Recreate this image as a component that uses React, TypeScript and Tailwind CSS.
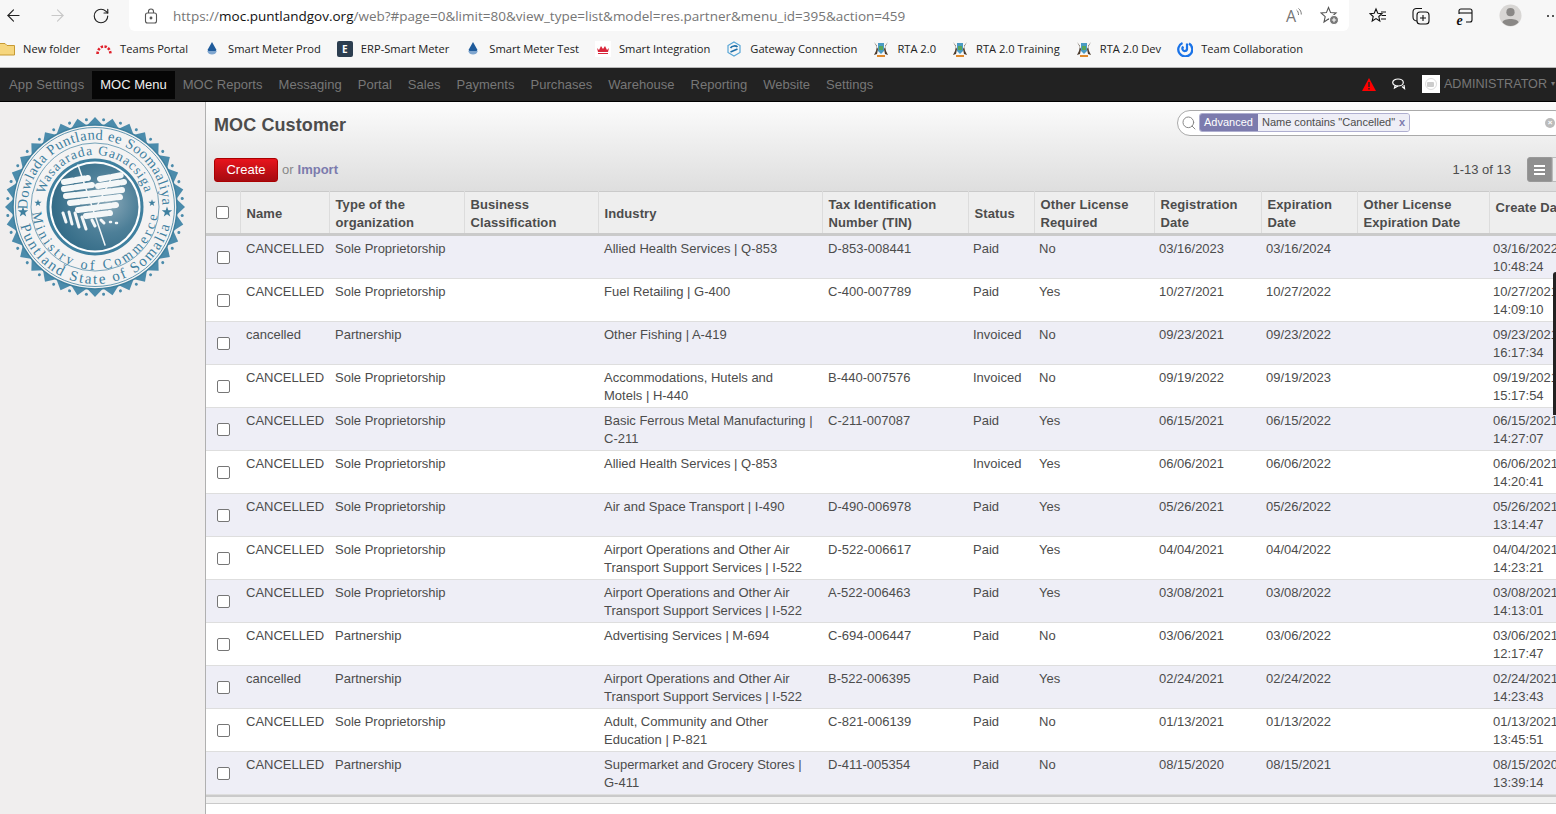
import { ReactNode } from "react";
import { ArrowLeft, ArrowRight, RotateCw, Search } from "lucide-react";

const columns = [34, 89, 135, 134, 224, 146, 66, 120, 107, 96, 132, 120];

const rows = [
  ["CANCELLED", "Sole Proprietorship", "Allied Health Services | Q-853", "D-853-008441", "Paid", "No", "03/16/2023", "03/16/2024", "03/16/2022", "10:48:24"],
  ["CANCELLED", "Sole Proprietorship", "Fuel Retailing | G-400", "C-400-007789", "Paid", "Yes", "10/27/2021", "10/27/2022", "10/27/2021", "14:09:10"],
  ["cancelled", "Partnership", "Other Fishing | A-419", "", "Invoiced", "No", "09/23/2021", "09/23/2022", "09/23/2021", "16:17:34"],
  ["CANCELLED", "Sole Proprietorship", "Accommodations, Hutels and\nMotels | H-440", "B-440-007576", "Invoiced", "No", "09/19/2022", "09/19/2023", "09/19/2021", "15:17:54"],
  ["CANCELLED", "Sole Proprietorship", "Basic Ferrous Metal Manufacturing |\nC-211", "C-211-007087", "Paid", "Yes", "06/15/2021", "06/15/2022", "06/15/2021", "14:27:07"],
  ["CANCELLED", "Sole Proprietorship", "Allied Health Services | Q-853", "", "Invoiced", "Yes", "06/06/2021", "06/06/2022", "06/06/2021", "14:20:41"],
  ["CANCELLED", "Sole Proprietorship", "Air and Space Transport | I-490", "D-490-006978", "Paid", "Yes", "05/26/2021", "05/26/2022", "05/26/2021", "13:14:47"],
  ["CANCELLED", "Sole Proprietorship", "Airport Operations and Other Air\nTransport Support Services | I-522", "D-522-006617", "Paid", "Yes", "04/04/2021", "04/04/2022", "04/04/2021", "14:23:21"],
  ["CANCELLED", "Sole Proprietorship", "Airport Operations and Other Air\nTransport Support Services | I-522", "A-522-006463", "Paid", "Yes", "03/08/2021", "03/08/2022", "03/08/2021", "14:13:01"],
  ["CANCELLED", "Partnership", "Advertising Services | M-694", "C-694-006447", "Paid", "No", "03/06/2021", "03/06/2022", "03/06/2021", "12:17:47"],
  ["cancelled", "Partnership", "Airport Operations and Other Air\nTransport Support Services | I-522", "B-522-006395", "Paid", "Yes", "02/24/2021", "02/24/2022", "02/24/2021", "14:23:43"],
  ["CANCELLED", "Sole Proprietorship", "Adult, Community and Other\nEducation | P-821", "C-821-006139", "Paid", "No", "01/13/2021", "01/13/2022", "01/13/2021", "13:45:51"],
  ["CANCELLED", "Partnership", "Supermarket and Grocery Stores |\nG-411", "D-411-005354", "Paid", "No", "08/15/2020", "08/15/2021", "08/15/2020", "13:39:14"],
];

const headers = ["Name", "Type of the organization", "Business Classification", "Industry", "Tax Identification Number (TIN)", "Status", "Other License Required", "Registration Date", "Expiration Date", "Other License Expiration Date"];

const menus = ["Messaging", "Portal", "Sales", "Payments", "Purchases", "Warehouse", "Reporting", "Website", "Settings"];

function Drop({ color }: { color: string }): ReactNode {
  return (
    <svg width="16" height="16" viewBox="0 0 16 16">
      <path d="M8 1 L12.5 9 A5.2 5.2 0 0 1 3.5 9 Z" fill={color} />
      <path d="M3.2 10 H12.8 A5 5 0 0 1 3.2 10 Z" fill="#7fa6cf" />
    </svg>
  );
}

function Crest(): ReactNode {
  return (
    <svg width="16" height="18" viewBox="0 0 16 18">
      <path d="M1 2 L4 6 L3 11 L1 15 L4 14 L5 9 Z M15 2 L12 6 L13 11 L15 15 L12 14 L11 9 Z" fill="#4a3a2c" />
      <path d="M5 3 H11 V11 L8 14 L5 11 Z" fill="#4a9bc4" />
      <path d="M6 6 H10 V10 H6 Z" fill="#58a55c" />
      <path d="M4 15 H12 V17 H4 Z" fill="#e08a2c" />
    </svg>
  );
}

function Bookmark({ icon, label }: { icon: ReactNode; label: string }): ReactNode {
  return (
    <div className="flex shrink-0 items-center gap-2">
      <div className="flex h-4 w-4 items-center justify-center">{icon}</div>
      <span className="text-[11.15px] text-[#222]">{label}</span>
    </div>
  );
}

function BrowserBar(): ReactNode {
  return (
    <div className="bg-[#f7f7f7] font-['Open_Sans',sans-serif]">
      <div className="flex h-[34px] items-start">
        <div className="flex h-[31px] w-[129px] shrink-0 items-center pl-[4px] text-[#222]">
          <ArrowLeft size={19} strokeWidth={1.4} />
          <ArrowRight size={19} strokeWidth={1.4} className="ml-[25px] text-[#c8c8c8]" />
          <RotateCw size={18} strokeWidth={1.5} className="ml-[25px]" />
        </div>
        <div className="flex h-[31px] w-[1220px] shrink-0 items-center rounded-b-md bg-white">
          <svg width="14" height="16" viewBox="0 0 14 16" fill="none" stroke="#555" strokeWidth="1.1" className="ml-[15px]">
            <rect x="1.5" y="5" width="11" height="10" rx="2" />
            <path d="M4.5 5 V3.5 A2.5 2.5 0 0 1 9.5 3.5 V5" />
            <circle cx="7" cy="10" r="0.9" fill="#555" />
          </svg>
          <span className="ml-[15px] pt-px text-[13.5px] text-[#767676]">
            https://<span className="text-[#111]">moc.puntlandgov.org</span>/web?#page=0&limit=80&view_type=list&model=res.partner&menu_id=395&action=459
          </span>
          <div className="ml-auto mr-[18px] flex items-start text-[#777]">
            <span className="text-[16px] leading-none">A</span>
            <svg width="6" height="10" viewBox="0 0 6 10" fill="none" stroke="#777" strokeWidth="1">
              <path d="M0.500 2 C2 3 2.500 5 2.500 7 M2.500 0.500 C4.500 2 5.300 4 5.300 6.500" />
            </svg>
          </div>
          <svg width="19" height="19" viewBox="0 0 19 19" fill="none" stroke="#555" strokeWidth="1.1" className="mr-[10px]">
            <path d="M8.500 1.500 L10.600 6.600 L16 7 L11.800 10.600 L13 16 L8.500 13 L4 16 L5.200 10.600 L1 7 L6.400 6.600 Z" />
            <circle cx="14" cy="14" r="4.500" fill="#777" stroke="#fff" />
            <path d="M11.800 14 H16.200 M14 11.800 V16.200" stroke="#fff" />
          </svg>
        </div>
        <div className="flex h-[31px] items-center">
          <svg width="18" height="18" viewBox="0 0 18 18" fill="none" stroke="#111" strokeWidth="1.1" className="ml-[20px]">
            <path d="M7 2 L8.800 6.200 L13 6.600 L9.800 9.500 L10.800 14 L7 11.600 L3.200 14 L4.200 9.500 L1 6.600 L5.200 6.200 Z" />
            <path d="M12 5 H17 M12.500 8.500 H17 M12 12 H17" />
          </svg>
          <svg width="20" height="20" viewBox="0 0 20 20" fill="none" stroke="#111" strokeWidth="1.1" className="ml-[24px]">
            <path d="M6 15 C3 15 2 13 2 11 V6 C2 4 3.500 2.500 5.500 2.500 H11" />
            <rect x="6" y="6" width="12" height="12" rx="3" />
            <path d="M12 9 V15 M9 12 H15" />
          </svg>
          <svg width="20" height="20" viewBox="0 0 20 20" fill="none" stroke="#111" strokeWidth="1.1" className="ml-[24px]">
            <path d="M4 8 V5 A2 2 0 0 1 6 3 H15 A2 2 0 0 1 17 5 V14 A2 2 0 0 1 15 16 H11" />
            <path d="M4 7 H17" />
            <text x="1.500" y="19" fontSize="14" fontWeight="700" fontStyle="italic" fill="#111" stroke="none" fontFamily="'Liberation Serif',serif">e</text>
          </svg>
          <svg width="23" height="23" viewBox="0 0 24 24" className="ml-[24px]">
            <circle cx="12" cy="12" r="11.500" fill="#d8d6d4" />
            <circle cx="12" cy="8.500" r="4.300" fill="#8a8886" />
            <path d="M3.500 19 C5 14.500 19 14.500 20.500 19 A11 11 0 0 1 3.500 19 Z" fill="#8a8886" />
          </svg>
          <span className="ml-[25px] flex gap-[3px]">
            <span className="h-[2px] w-[2px] rounded-full bg-[#222]" />
            <span className="h-[2px] w-[2px] rounded-full bg-[#222]" />
          </span>
        </div>
      </div>
      <div className="-ml-[1px] flex h-[34px] items-center gap-4 border-b border-[#b8b8b8] pb-[2px]">
        <Bookmark label="New folder" icon={
          <svg width="16" height="14" viewBox="0 0 16 14"><path d="M0.500 1.500 H6 L8 3.500 H15.500 V13 H0.500 Z" fill="#f6d67e" stroke="#c79a33" /></svg>
        } />
        <Bookmark label="Teams Portal" icon={
          <svg width="16" height="12" viewBox="0 0 16 12" fill="none" stroke="#e0202a" strokeWidth="2.600" strokeDasharray="2.400 1.400"><path d="M1.500 11 C2 1 14 1 14.500 11" /></svg>
        } />
        <Bookmark label="Smart Meter Prod" icon={<Drop color="#1f5b9b" />} />
        <Bookmark label="ERP-Smart Meter" icon={
          <div className="flex h-4 w-4 items-center justify-center rounded-[2px] bg-[#2c3e50] text-[10px] font-bold text-white">E</div>
        } />
        <Bookmark label="Smart Meter Test" icon={<Drop color="#1f5b9b" />} />
        <Bookmark label="Smart Integration" icon={
          <svg width="16" height="16" viewBox="0 0 16 16"><rect width="16" height="16" fill="#fff" /><path d="M2 7 L4 9 L6 5 L8 8 L10 5 L12 9 L14 7 L13 11 H3 Z" fill="#d9263a" /><path d="M3 12 H13 V13 H3 Z" fill="#d9263a" /></svg>
        } />
        <Bookmark label="Gateway Connection" icon={
          <svg width="16" height="16" viewBox="0 0 16 16" fill="none"><path d="M8 1 L14 4.500 V11.500 L8 15 L2 11.500 V4.500 Z" stroke="#58a6d6" strokeWidth="1.200" /><path d="M4.500 7 C6 4.500 10 4.500 11.500 6 M4.500 11 L11.500 8" stroke="#1f6fa8" strokeWidth="1.700" /></svg>
        } />
        <Bookmark label="RTA 2.0" icon={<Crest />} />
        <Bookmark label="RTA 2.0 Training" icon={<Crest />} />
        <Bookmark label="RTA 2.0 Dev" icon={<Crest />} />
        <Bookmark label="Team Collaboration" icon={
          <svg width="16" height="16" viewBox="0 0 16 16" fill="none"><path d="M5.500 2 A7 7 0 1 0 12 2.500" stroke="#1a73e8" strokeWidth="2.300" /><path d="M10 2.500 V7.500 A2.300 2.300 0 1 1 6.500 5.800" stroke="#1a73e8" strokeWidth="2.200" /></svg>
        } />
      </div>
    </div>
  );
}

function NavBar(): ReactNode {
  return (
    <div className="flex h-[34px] items-center justify-between border-b border-black bg-[#222] pl-px font-['Liberation_Sans',sans-serif] text-[13px] tracking-[0.03px] text-[#777]">
      <div className="flex items-center">
        <span className="px-2 tracking-[0.13px]">App Settings</span>
        <span className="flex h-[28px] items-center bg-[#060606] px-2 tracking-normal text-[#eee]">MOC Menu</span>
        <span className="px-2">MOC Reports</span>
        {menus.map((m) => (
          <span key={m} className="px-2">{m}</span>
        ))}
      </div>
      <div className="flex items-center">
        <svg width="14" height="13" viewBox="0 0 14 13">
          <path d="M7 0 L14 13 H0 Z" fill="#f00" />
          <path d="M6.300 4 H7.700 V9 H6.300 Z M6.300 10 H7.700 V11.500 H6.300 Z" fill="#222" />
        </svg>
        <svg width="14" height="12" viewBox="0 0 14 12" fill="none" stroke="#fff" strokeWidth="1.200" className="ml-[16px]">
          <ellipse cx="6" cy="4.500" rx="5.300" ry="3.500" />
          <path d="M3 8 L2.500 10 L6 8 M10 8.500 L12.500 10.500 L12 7" />
        </svg>
        <div className="ml-[16px] flex h-[18px] w-[18px] items-center justify-center bg-white">
          <div className="flex h-[12px] w-[12px] items-center justify-center rounded-full border border-[#ddd]">
            <div className="h-[5px] w-[7px] rounded-[1px] bg-[#ccc]" />
          </div>
        </div>
        <span className="ml-[4px] whitespace-nowrap text-[12.6px] tracking-normal">ADMINISTRATOR</span>
        <span className="ml-[4px] w-[5px] overflow-hidden text-[8px]">▾</span>
      </div>
    </div>
  );
}

// arc on the seal, angles in degrees clockwise from 12 o'clock
function arc(r: number, from: number, to: number): string {
  const pt = (a: number) => {
    const rad = (a * Math.PI) / 180;
    return `${(91 + r * Math.sin(rad)).toFixed(2)} ${(91 - r * Math.cos(rad)).toFixed(2)}`;
  };
  const sweep = to > from ? 1 : 0;
  const large = Math.abs(to - from) > 180 ? 1 : 0;
  return `M ${pt(from)} A ${r} ${r} 0 ${large} ${sweep} ${pt(to)}`;
}

function Star({ x, y, r }: { x: number; y: number; r: number }): ReactNode {
  const pts = Array.from({ length: 10 }, (_, i) => {
    const a = (i * Math.PI) / 5 - Math.PI / 2;
    const d = i % 2 === 0 ? r : r * 0.4;
    return `${(x + d * Math.cos(a)).toFixed(2)},${(y + d * Math.sin(a)).toFixed(2)}`;
  });
  return <polygon points={pts.join(" ")} />;
}

function Emblem(): ReactNode {
  const teeth = Array.from({ length: 32 }, (_, i) => (i * 360) / 32);
  const teal = "#3f809f";
  return (
    <svg width="182" height="182" viewBox="0 0 182 182" className="ml-[4px] mt-[14px]">
      <defs>
        <radialGradient id="seal" cx="0.65" cy="0.45" r="0.7">
          <stop offset="0" stopColor="#8aa9b9" />
          <stop offset="0.5" stopColor="#4d7f98" />
          <stop offset="1" stopColor="#2f6884" />
        </radialGradient>
        <filter id="soft"><feGaussianBlur stdDeviation="0.6" /></filter>
        <path id="topOuter" d={arc(67.5, -92, 92)} />
        <path id="bottomOuter" d={arc(77, -104, -256)} />
        <path id="topInner" d={arc(52, -76, 76)} />
        <path id="bottomInner" d={arc(63, -95, -265)} />
      </defs>
      {teeth.map((a) => (
        <g key={a} transform={`rotate(${a} 91 91)`}>
          <path d="M82.500 10 L91 1 L99.500 10 Z" fill="#4b8bab" />
          <circle cx="99.600" cy="3.800" r="1.500" fill="#4b8bab" />
        </g>
      ))}
      <circle cx="91" cy="91" r="82" fill="#f4f3f3" stroke={teal} strokeWidth="1.500" />
      <circle cx="91" cy="91" r="79.500" fill="none" stroke={teal} strokeWidth="0.800" />
      <circle cx="91" cy="91" r="64" fill="none" stroke={teal} strokeWidth="0.700" />
      <g fill={teal} fontFamily="'Liberation Serif',serif">
        <text fontSize="14.500">
          <textPath href="#topOuter" textLength="212">Dowlada Puntland ee Soomaaliya</textPath>
        </text>
        <text fontSize="15">
          <textPath href="#bottomOuter" textLength="204">Puntland State of Somalia</textPath>
        </text>
        <text fontSize="13.500">
          <textPath href="#topInner" textLength="136">Wasaarada Ganacsiga</textPath>
        </text>
        <text fontSize="14">
          <textPath href="#bottomInner" textLength="184">Ministry of  Commerce</textPath>
        </text>
        <Star x={19} y={96} r={5.500} />
        <Star x={163} y={96} r={5.500} />
        <Star x={34} y={87} r={3.800} />
        <Star x={148} y={87} r={3.800} />
      </g>
      <circle cx="91" cy="91" r="48.500" fill={teal} />
      <circle cx="91" cy="91" r="45.500" fill="#fff" />
      <circle cx="91" cy="91" r="43.500" fill="url(#seal)" />
      <g fill="none" stroke="#f4f7f8" strokeLinecap="round" filter="url(#soft)">
        <path d="M74 49 L101 129" strokeWidth="1.500" />
        <path d="M109 59 L91 94" strokeWidth="1.500" />
        <g strokeWidth="6" strokeDasharray="9 3">
          <path d="M60 66 L84 62" /><path d="M96 63 L118 59" />
          <path d="M60 73 L88 69" /><path d="M94 70 L120 66" />
          <path d="M62 80 L118 74" />
          <path d="M66 87 L116 81" />
          <path d="M74 94 L112 89" />
          <path d="M82 100 L106 97" />
        </g>
        <g strokeWidth="3">
          <path d="M59 97 L62 106" /><path d="M65 96 L68 108" /><path d="M71 97 L75 111" /><path d="M78 101 L82 113" /><path d="M88 104 L91 110" /><path d="M97 104 L100 107" />
        </g>
        <path d="M106 106 L107 106 M112 107 L113 107" strokeWidth="2.500" />
      </g>
    </svg>
  );
}

function Checkbox(): ReactNode {
  return <div className="mx-auto h-[13px] w-[13px] rounded-[2px] border border-[#767676] bg-white" />;
}

function ListTable(): ReactNode {
  return (
    <table className="w-[1403px] table-fixed border-collapse text-[13px] leading-[18px] text-[#4c4c4c]">
      <colgroup>
        {columns.map((w, i) => (
          <col key={i} width={w} />
        ))}
      </colgroup>
      <thead>
        <tr className="h-[43px] border-t border-b-[3px] border-t-[#cacaca] border-b-[#cacaca] bg-[#eee]">
          <th className="border-r border-[#dcdcdc] p-0"><Checkbox /></th>
          {headers.map((h) => (
            <th key={h} className="border-r border-[#dcdcdc] px-[6px] pb-0 pt-[2px] text-left align-middle font-bold tracking-[0.1px]">{h}</th>
          ))}
          <th className="whitespace-nowrap px-[6px] pb-[10px] pt-0 text-left align-middle font-bold tracking-[0.1px]">Create Date</th>
        </tr>
      </thead>
      <tbody>
        {rows.map((r, i) => (
          <tr key={i} className={`h-[43px] border-b border-[#dedede] ${i % 2 === 0 ? "bg-[#eeeef6]" : "bg-white"}`}>
            <td className="p-0"><Checkbox /></td>
            <td className="px-[6px] pb-[2px] pt-[4px] align-top">{r[0]}</td>
            <td className="px-[6px] pb-[2px] pt-[4px] align-top">{r[1]}</td>
            <td className="px-[6px] pb-[2px] pt-[4px] align-top" />
            <td className="whitespace-pre-line px-[6px] pb-[2px] pt-[4px] align-top">{r[2]}</td>
            <td className="px-[6px] pb-[2px] pt-[4px] align-top">{r[3]}</td>
            <td className="px-[5px] pb-[2px] pt-[4px] align-top">{r[4]}</td>
            <td className="px-[5px] pb-[2px] pt-[4px] align-top">{r[5]}</td>
            <td className="px-[5px] pb-[2px] pt-[4px] align-top">{r[6]}</td>
            <td className="px-[5px] pb-[2px] pt-[4px] align-top">{r[7]}</td>
            <td className="px-[5px] pb-[2px] pt-[4px] align-top" />
            <td className="whitespace-nowrap px-[4px] pb-[2px] pt-[4px] align-top">{r[8]}<br />{r[9]}</td>
          </tr>
        ))}
      </tbody>
    </table>
  );
}

function Header(): ReactNode {
  return (
    <div className="h-[89px] bg-gradient-to-b from-[#fcfcfc] to-[#dedede] px-2">
      <div className="flex h-[45px] items-start justify-between">
        <h1 className="mt-[12px] text-[18px] font-bold leading-[22px] tracking-[0.1px] text-[#4c4c4c]">MOC Customer</h1>
        <div className="relative -mr-[20px] mt-[8px] flex h-[26px] w-[391px] items-center rounded-full border border-[#aaa] bg-white pl-[3px]">
          <Search size={16} strokeWidth={1.5} className="text-[#888]" />
          <div className="-mt-px ml-[2px] flex h-[19px] items-center overflow-hidden rounded-[3px] border border-[#afafd0] bg-[#f0eeee] text-[11px] leading-none text-[#4c4c4c]">
            <span className="flex h-full items-center bg-[#7c7bad] pl-[4px] pr-[5px] text-white">Advanced</span>
            <span className="flex h-full items-center bg-[#eeeef6] pl-[4px] pr-[4px]">Name contains "Cancelled"<span className="ml-[4px] font-bold text-[#7c7bad]">x</span></span>
          </div>
          <div className="absolute right-[12px] top-[7px] flex h-[10px] w-[10px] items-center justify-center rounded-full bg-[#bbb] text-[8px] font-bold leading-none text-white">×</div>
        </div>
      </div>
      <div className="flex h-[44px] items-start justify-between">
        <div className="mt-[11px] flex items-center text-[13px] text-[#888]">
          <button className="flex h-[24px] w-[64px] items-center justify-center rounded-[3px] border border-[#a00] bg-gradient-to-b from-[#e8141c] to-[#a50b10] text-[13px] text-white">Create</button>
          <span className="ml-[4px]">or</span>
          <span className="ml-[4px] font-bold text-[#7c7bad]">Import</span>
        </div>
        <div className="-mr-[18px] mt-[10px] flex items-center text-[13px] text-[#4c4c4c]">
          <span>1-13 of 13</span>
          <div className="ml-[16px] flex h-[25px] w-[25px] items-center justify-center rounded-l-[3px] border border-[#999] bg-[#8f8f8f]">
            <div className="flex flex-col gap-[2px]">
              <div className="h-[2px] w-[11px] bg-white" />
              <div className="h-[2px] w-[11px] bg-white" />
              <div className="h-[2px] w-[11px] bg-white" />
            </div>
          </div>
          <div className="h-[25px] w-[14px] border border-[#bbb] bg-[#eee]" />
        </div>
      </div>
    </div>
  );
}

export default function App(): ReactNode {
  return (
    <div className="relative h-[814px] w-[1556px] overflow-hidden bg-white">
      <BrowserBar />
      <NavBar />
      <div className="flex h-[712px] font-['Liberation_Sans',sans-serif]">
        <aside className="w-[206px] shrink-0 border-r border-[#b0b0b0] bg-[#f0eeee]">
          <Emblem />
        </aside>
        <main className="w-[1350px] shrink-0 overflow-hidden">
          <Header />
          <ListTable />
          <div className="h-[9px] border-t-2 border-b border-t-[#cacaca] border-b-[#cacaca] bg-[#f0f0f0]" />
        </main>
      </div>
      {/* sliver of a dark window at the right edge */}
      <div className="absolute right-0 top-[272px] h-[143px] w-[3px] rounded-tl-sm bg-[#222]" />
    </div>
  );
}
